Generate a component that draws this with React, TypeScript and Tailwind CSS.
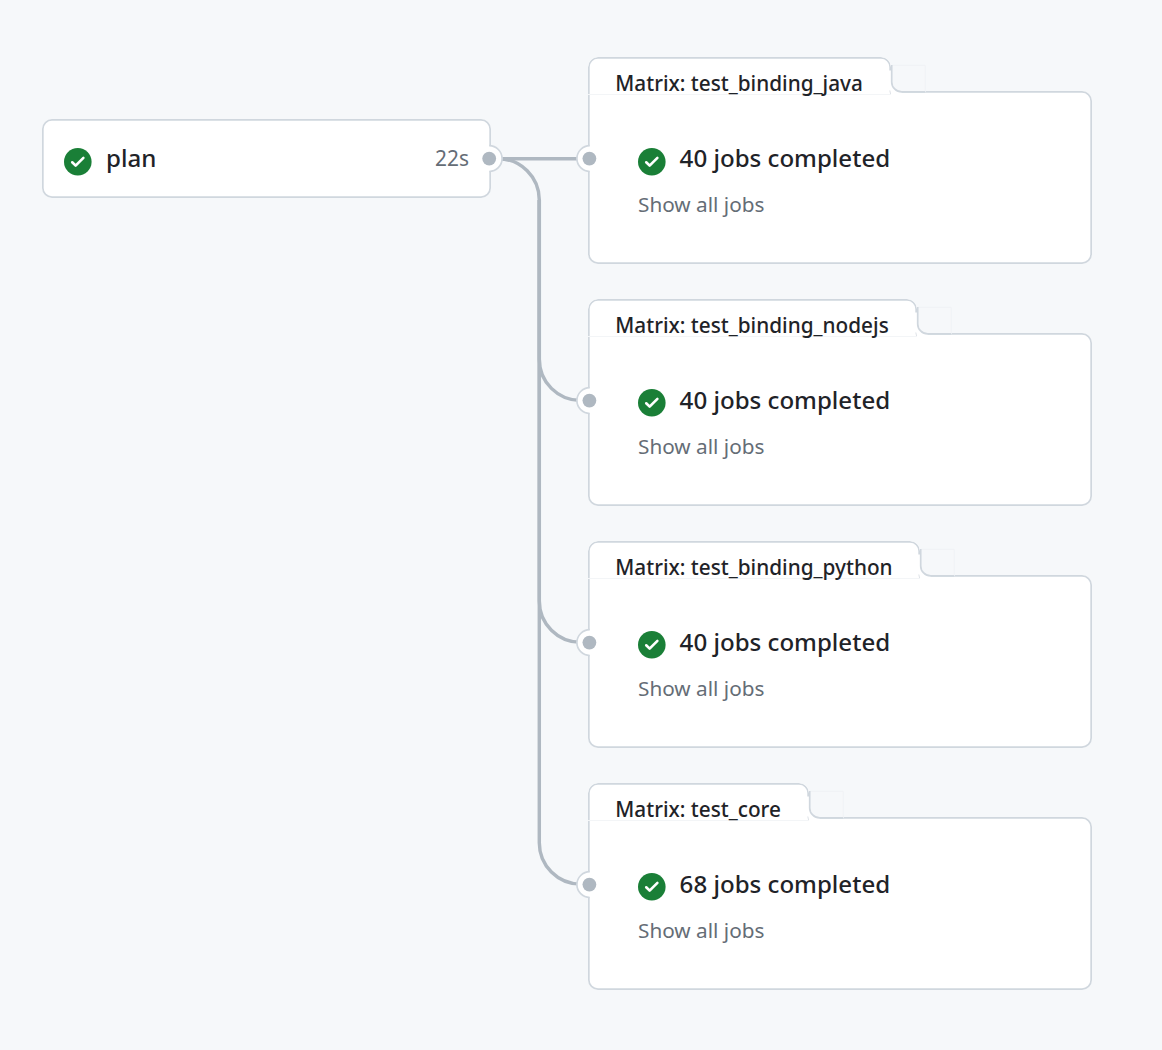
const groups = [
  { name: "Matrix: test_binding_java", jobs: "40 jobs completed", tab: "w-[303px]" },
  { name: "Matrix: test_binding_nodejs", jobs: "40 jobs completed", tab: "w-[329px]" },
  { name: "Matrix: test_binding_python", jobs: "40 jobs completed", tab: "w-[332px]" },
  { name: "Matrix: test_core", jobs: "68 jobs completed", tab: "w-[221px]" },
];

function CheckCircle() {
  return (
    <svg viewBox="0 0 16 16" className="h-[27.6px] w-[27.6px] shrink-0 overflow-visible">
      <circle cx="8" cy="8" r="8" fill="#1a7f37" />
      <path
        d="M11.78 6.28a.751.751 0 0 0-.018-1.042.751.751 0 0 0-1.042-.018L6.75 9.19 5.28 7.72a.751.751 0 0 0-1.042.018.751.751 0 0 0-.018 1.042l2 2a.75.75 0 0 0 1.06 0Z"
        fill="#fff"
      />
    </svg>
  );
}

function PortOut() {
  return (
    <svg viewBox="0 -0.6 28 29" className="absolute -right-[13px] top-[25px] h-[29px] w-7">
      <path d="M11 1.1H15.2V26.9H11Z" fill="#fff" />
      <path d="M13.2 1.1A12.9 12.9 0 0 1 13.2 26.9" fill="#fff" stroke="#d0d7de" strokeWidth="1.7" />
      <circle cx="13.2" cy="14" r="6.9" fill="#afb8c1" />
    </svg>
  );
}

function PortIn() {
  return (
    <svg viewBox="0 -0.6 28 29" className="absolute -left-[13px] top-[53px] h-[29px] w-7">
      <path d="M12.8 1.1H18V26.9H12.8Z" fill="#fff" />
      <path d="M14.8 1.1A12.9 12.9 0 0 0 14.8 26.9" fill="#fff" stroke="#d0d7de" strokeWidth="1.7" />
      <circle cx="14.4" cy="14" r="6.9" fill="#afb8c1" />
    </svg>
  );
}

/* Inverted corner that joins a tab to the top edge of its card. */
function TabFillet() {
  return (
    <svg viewBox="0 0 40 34" className="absolute left-[calc(100%-3px)] top-[5px] h-[34px] w-10" fill="none">
      <path d="M0.5 8.5H3.7V19.9A10 10 0 0 0 13.7 29.9V32H0.5Z" fill="#fff" />
      <path d="M3.7 3.3H37.2V30" stroke="#f0f2f5" strokeWidth="1" />
      <path d="M1.8 28.5L2.6 32" stroke="#dfe3e8" strokeWidth="1" />
      <path d="M3.7 3V19.9A10 10 0 0 0 13.7 29.9H37" stroke="#d0d7de" strokeWidth="1.7" />
    </svg>
  );
}

function Connectors() {
  return (
    <svg
      viewBox="0 0 1162 1050"
      className="pointer-events-none absolute left-0 top-0 h-[1050px] w-[1162px]"
      fill="none"
      stroke="#afb8c1"
      strokeWidth="3.45"
    >
      <path d="M498 158.7H582" />
      <path d="M498 158.7A41.3 41.3 0 0 1 539.3 200V359.2A41.3 41.3 0 0 0 580.6 400.5" />
      <path d="M539.3 200V601A41.3 41.3 0 0 0 580.6 642.3" />
      <path d="M539.3 200V842.8A41.3 41.3 0 0 0 580.6 884.1" />
    </svg>
  );
}

export default function App() {
  return (
    <div className="relative flex h-[1050px] w-[1162px] items-start overflow-hidden bg-[#f6f8fa] pl-[42px] font-['Noto_Sans',sans-serif] text-[#1f2328]">
      <Connectors />
      <div className="relative mt-[119px] flex h-[79px] w-[449px] items-center rounded-[10px] bg-white pb-[2px] pl-[22.4px] pr-[22px] inset-ring-[1.7px] inset-ring-[#d0d7de]">
        <div className="mt-2 flex">
          <CheckCircle />
        </div>
        <span className="ml-[14px] text-[24.1px] font-medium leading-9">plan</span>
        <span className="ml-auto text-[20.9px] leading-8 text-[#656d76]">22s</span>
        <PortOut />
      </div>
      <div className="ml-[97px] mt-[57px] flex w-[504px] flex-col gap-[34.9px]">
        {groups.map((g) => (
          <section key={g.name} className="relative h-[207px]">
            <div className="flex h-[34px] items-end">
              <div
                className={`relative z-10 h-[38px] shrink-0 translate-y-[4px] whitespace-nowrap rounded-t-[10px] border-b border-[#f3f5f7] bg-white pl-[27.3px] pt-[11px] text-[20.75px] font-medium leading-[31px] ${g.tab}`}
              >
                <div className="absolute inset-x-0 top-0 h-[37px] overflow-hidden rounded-t-[10px]">
                  <div className="h-[60px] rounded-[10px] inset-ring-[1.7px] inset-ring-[#d0d7de]" />
                </div>
                <TabFillet />
                <span className="relative">{g.name}</span>
              </div>
            </div>
            <div className="relative h-[173px] rounded-b-[10px] rounded-tr-[10px] bg-white pl-[50px] pt-[49px] inset-ring-[1.7px] inset-ring-[#d0d7de]">
              <PortIn />
              <div className="flex h-9 items-center">
                <div className="mt-[6.8px] flex">
                  <CheckCircle />
                </div>
                <span className="ml-[14px] text-[24.1px] font-medium leading-9">{g.jobs}</span>
              </div>
              <div className="mt-[13px] text-[20.75px] leading-[31px] text-[#656d76]">Show all jobs</div>
            </div>
          </section>
        ))}
      </div>
    </div>
  );
}
